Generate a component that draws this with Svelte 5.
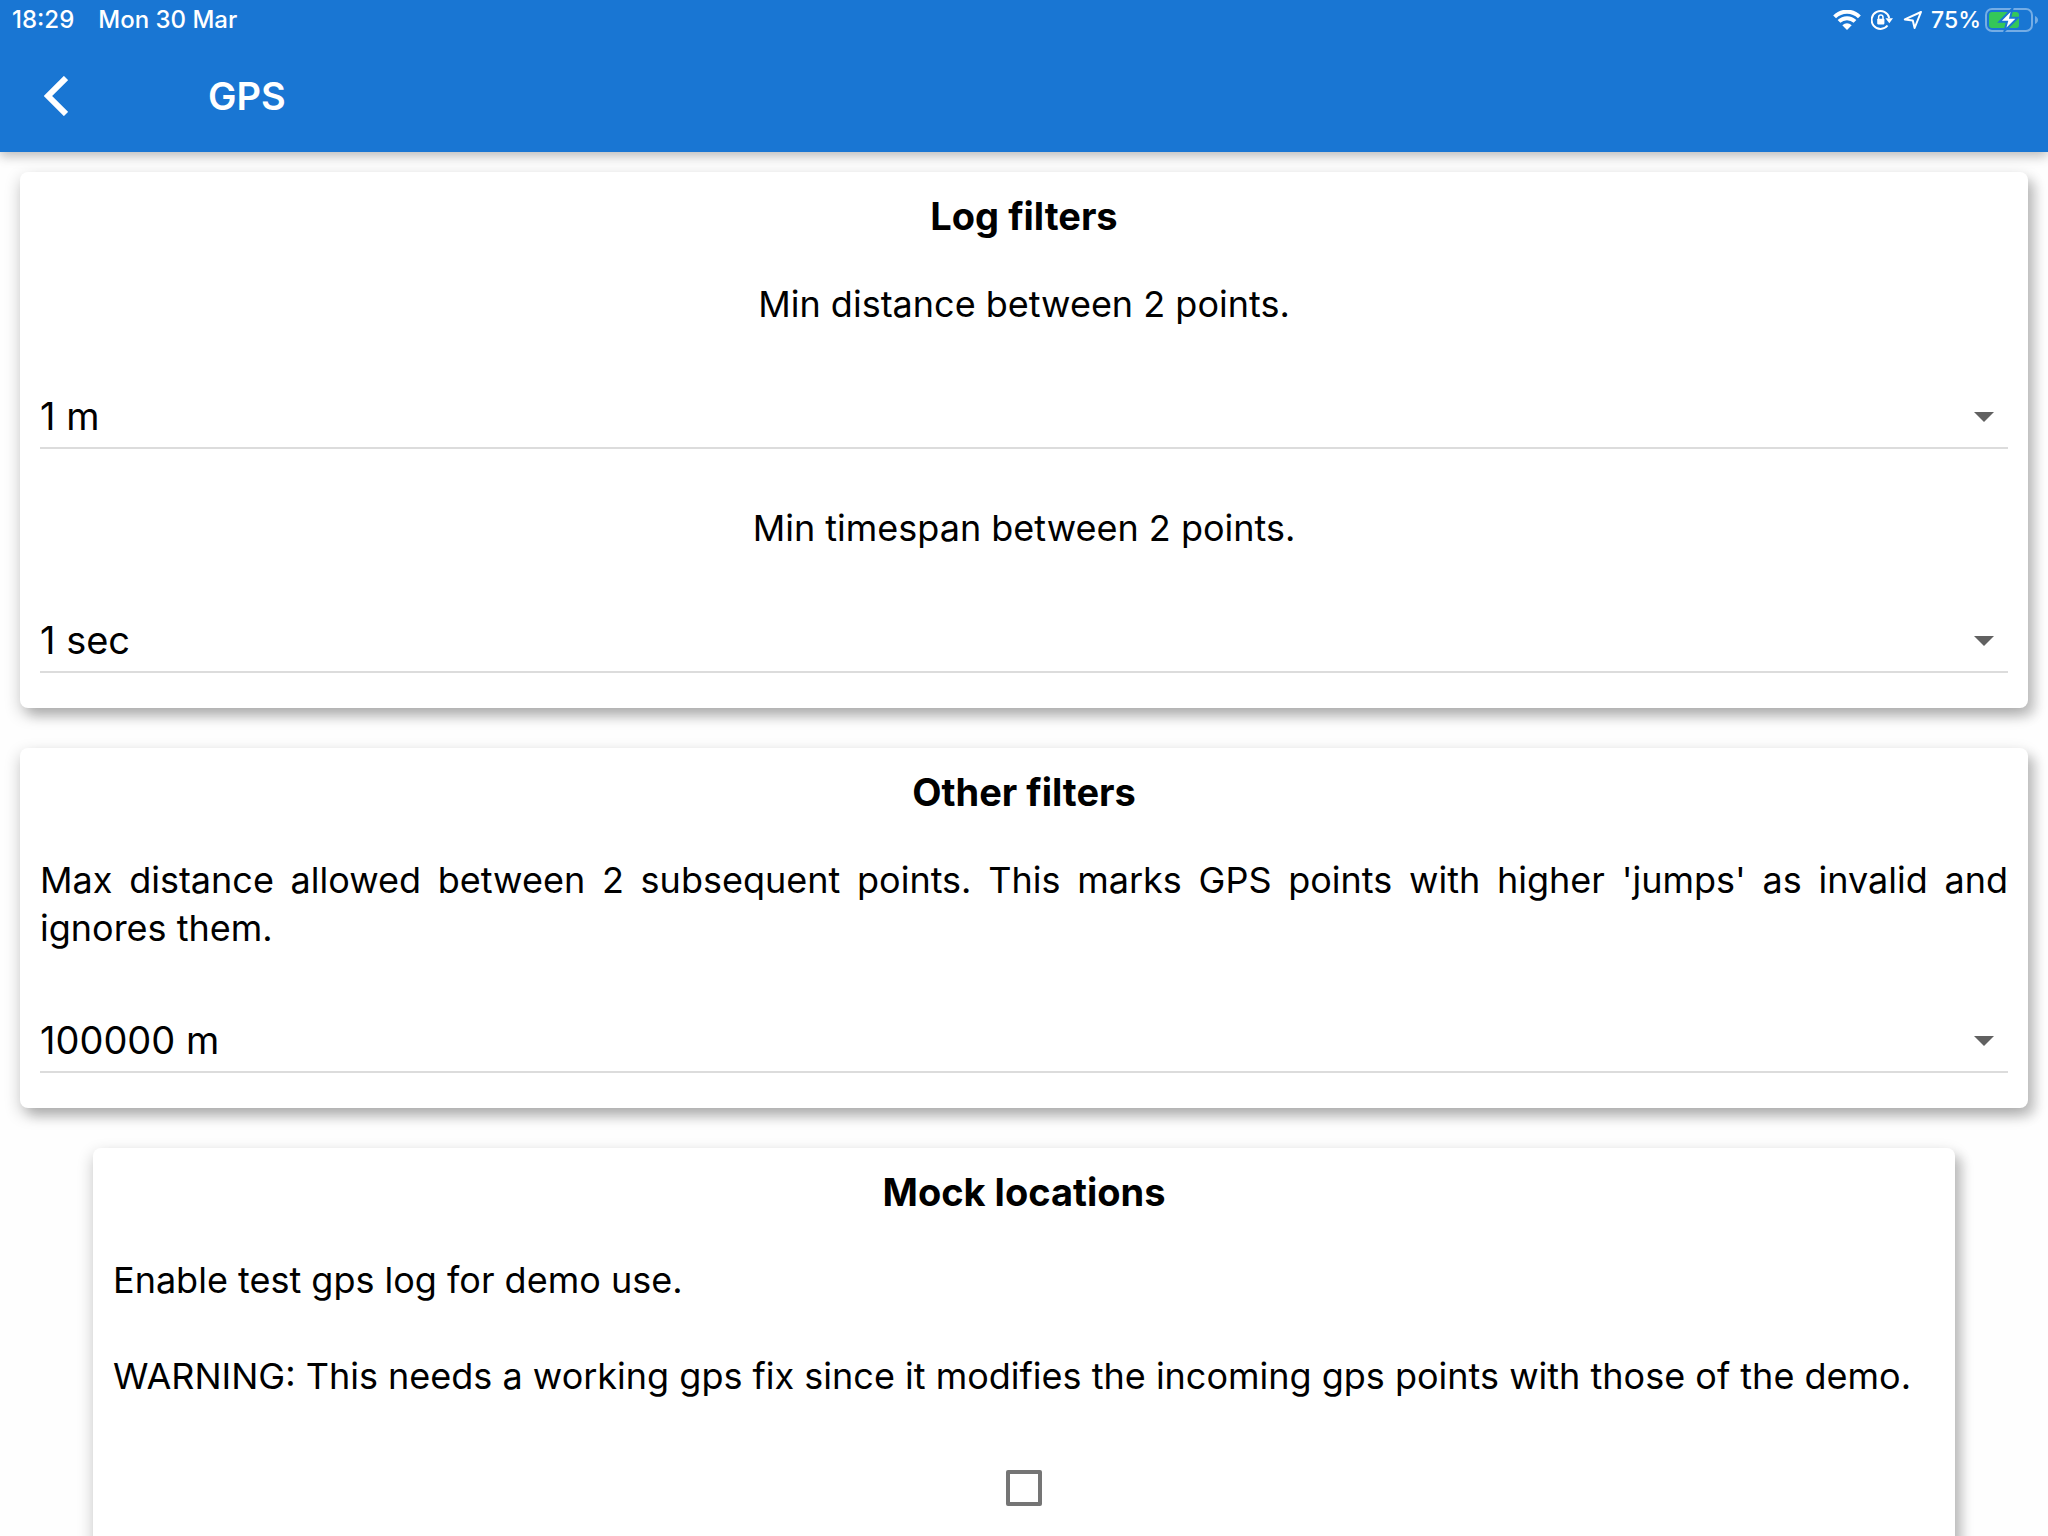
<script>
  const distances = ['1 m', '5 m', '10 m', '50 m'];
  const timespans = ['1 sec', '5 sec', '10 sec', '60 sec'];
  const jumps = ['100000 m', '1000 m', '100 m', '10 m'];

  let minDistance = $state(distances[0]);
  let minTimespan = $state(timespans[0]);
  let maxJump = $state(jumps[0]);
  let mockEnabled = $state(false);
</script>

{#snippet caret()}
  <svg class="caret" viewBox="0 0 20 12" aria-hidden="true"><path d="M0 2h20L10 12z" /></svg>
{/snippet}

<div class="screen">
  <header>
    <div class="status">
      <div class="when">
        <span>18:29</span>
        <span>Mon 30 Mar</span>
      </div>
      <div class="indicators">
        <svg class="wifi" width="28" height="20" viewBox="0 0 28 20" aria-hidden="true">
          <path d="M1.600 6.800C8.500-.1 19.500-.1 26.400 6.800" />
          <path d="M6 11.400C10.500 7.100 17.500 7.100 22 11.400" />
          <path class="solid" d="M9.300 15.200Q14 11.400 18.700 15.200L14 20z" />
        </svg>
        <svg class="lock" width="22" height="20" viewBox="0 0 22 20" aria-hidden="true">
          <path d="M18.200 8A8.900 8.900 0 1 0 16.500 15.500" />
          <path class="solid" d="M14.500 8.300h7.500l-3.700 5z" />
          <rect class="solid" x="6.200" y="8.800" width="7.200" height="5.600" rx="0.800" />
          <path class="thin" d="M7.600 9V7.200a2.200 2.200 0 0 1 4.400 0V9" />
        </svg>
        <svg class="arrow" width="20" height="20" viewBox="0 0 20 20" aria-hidden="true">
          <path d="M18 2L1.800 9.400L9.800 10.600L11.600 18z" />
        </svg>
        <span>75%</span>
        <svg class="battery" width="54" height="24" viewBox="0 0 54 24" aria-hidden="true">
          <rect class="shell" x="1" y="1" width="46" height="22" rx="6" />
          <path class="nub" d="M50 8c4 1.500 4 6.500 0 8z" />
          <rect class="charge" x="4" y="4" width="30" height="16" rx="3" />
          <path class="bolt" d="M27.500 .5L14.500 13.800h7.500L19.500 23L32.800 9.700h-7.600z" />
        </svg>
      </div>
    </div>
    <div class="toolbar">
      <button class="back" type="button" aria-label="Back">
        <svg width="24" height="40" viewBox="0 0 24 40" aria-hidden="true">
          <path d="M22 2L4 20l18 18" />
        </svg>
      </button>
      <h1>GPS</h1>
    </div>
  </header>

  <main>
    <section class="card">
      <h2>Log filters</h2>
      <label for="min-distance">Min distance between 2 points.</label>
      <div class="dropdown">
        <select id="min-distance" bind:value={minDistance}>
          {#each distances as d}<option>{d}</option>{/each}
        </select>
        {@render caret()}
      </div>
      <label for="min-timespan">Min timespan between 2 points.</label>
      <div class="dropdown">
        <select id="min-timespan" bind:value={minTimespan}>
          {#each timespans as t}<option>{t}</option>{/each}
        </select>
        {@render caret()}
      </div>
    </section>

    <section class="card">
      <h2>Other filters</h2>
      <label class="justified" for="max-jump">Max distance allowed between 2 subsequent points. This marks GPS points with higher 'jumps' as invalid and ignores them.</label>
      <div class="dropdown">
        <select id="max-jump" bind:value={maxJump}>
          {#each jumps as j}<option>{j}</option>{/each}
        </select>
        {@render caret()}
      </div>
    </section>

    <section class="card inset">
      <h2>Mock locations</h2>
      <label class="notes" for="mock">
        <span>Enable test gps log for demo use.</span>
        <span>WARNING: This needs a working gps fix since it modifies the incoming gps points with those of the demo.</span>
      </label>
      <div class="check">
        <input id="mock" type="checkbox" bind:checked={mockEnabled} />
      </div>
    </section>
  </main>
</div>

<style>
  :global(body) {
    background: #fefefe;
  }

  .screen {
    display: flex;
    flex-direction: column;
    height: 100vh;
    overflow: hidden;
    font-family: Inter, "Liberation Sans", sans-serif;
    font-size: 38px;
    line-height: 48px;
    color: #000;
  }

  header {
    flex: none;
    position: relative;
    z-index: 1;
    background: #1976d3;
    color: #fff;
    box-shadow: 0 4px 10px rgba(0, 0, 0, 0.2), 0 2px 16px rgba(0, 0, 0, 0.1);
  }

  .status {
    display: flex;
    justify-content: space-between;
    align-items: center;
    height: 40px;
    padding: 0 9px 0 12px;
    font-size: 24px;
    line-height: 40px;
    font-weight: 500;
  }

  .when {
    display: flex;
    gap: 24px;
  }

  .indicators {
    display: flex;
    align-items: center;
    font-size: 23px;
  }

  .indicators svg {
    fill: none;
    stroke: #fff;
    stroke-width: 4;
  }

  .indicators .solid {
    fill: #fff;
    stroke: none;
  }

  .indicators .thin {
    stroke-width: 1.5;
  }

  .lock,
  .arrow {
    margin-left: 10px;
  }

  .indicators .lock {
    stroke-width: 2;
  }

  .indicators .arrow {
    margin-right: 8px;
    stroke-width: 2;
    stroke-linejoin: round;
  }

  .indicators .battery {
    margin-left: 4px;
    stroke-width: 2;
  }

  .indicators .shell {
    stroke: #75ade5;
  }

  .indicators .nub {
    fill: #75ade5;
    stroke: none;
  }

  .indicators .charge {
    fill: #34c759;
    stroke: none;
  }

  .indicators .bolt {
    fill: #fff;
    stroke: #1976d3;
  }

  .toolbar {
    display: flex;
    align-items: center;
    height: 112px;
  }

  .back {
    display: flex;
    align-items: center;
    justify-content: center;
    width: 112px;
    height: 112px;
    padding: 0;
    border: 0;
    background: none;
  }

  .back path {
    fill: none;
    stroke: #fff;
    stroke-width: 6;
  }

  h1 {
    margin: 0 0 0 96px;
    font-size: 38px;
    font-weight: 600;
  }

  main {
    flex: 1;
    min-height: 0;
    overflow-y: auto;
    scrollbar-width: none;
    display: flex;
    flex-direction: column;
    gap: 40px;
    padding: 20px;
  }

  .card {
    flex: none;
    box-sizing: border-box;
    display: flex;
    flex-direction: column;
    gap: 40px;
    padding: 20px;
    border-radius: 8px;
    background: #fff;
    box-shadow: 8px 8px 12px rgba(0, 0, 0, 0.16), 0 6px 16px rgba(0, 0, 0, 0.22);
  }

  .inset {
    margin: 0 73px;
  }

  h2 {
    margin: 0;
    font-size: 38px;
    font-weight: 700;
    text-align: center;
  }

  label {
    font-size: 36px;
    text-align: center;
  }

  .justified {
    text-align: justify;
  }

  .notes {
    display: flex;
    flex-direction: column;
    gap: 48px;
    text-align: left;
  }

  .dropdown {
    display: grid;
    align-items: center;
    height: 96px;
  }

  .dropdown > :global(*) {
    grid-area: 1 / 1;
  }

  select {
    width: 100%;
    height: 66px;
    padding: 2px 0 0;
    border: 0;
    border-bottom: 2px solid #dcdcdc;
    border-radius: 0;
    appearance: none;
    background: none;
    color: inherit;
    font: inherit;
  }

  .caret {
    justify-self: end;
    width: 20px;
    height: 12px;
    margin-right: 14px;
    fill: #616161;
    pointer-events: none;
  }

  .check {
    display: flex;
    align-items: center;
    justify-content: center;
    height: 96px;
  }

  input {
    width: 36px;
    height: 36px;
    margin: 0;
    border: 4px solid #757575;
    border-radius: 2px;
    appearance: none;
    background: #fff;
  }

  input:checked {
    background: #757575;
  }
</style>
